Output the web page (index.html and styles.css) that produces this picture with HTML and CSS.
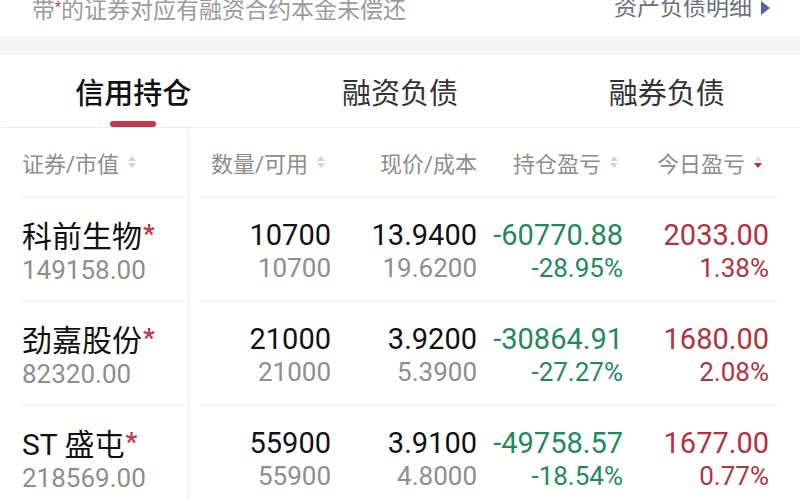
FILE: index.html
```html
<!DOCTYPE html>
<html lang="zh">
<head>
<meta charset="utf-8">
<link rel="stylesheet" href="styles.css">
</head>
<body>
<div class="notice">
  <span class="notice-text">带<span class="star-s">*</span>的证券对应有融资合约本金未偿还</span>
  <span class="notice-link">资产负债明细<span class="tri-right"></span></span>
</div>
<div class="band"></div>
<div class="tabs">
  <div class="tab active">信用持仓<span class="underline"></span></div>
  <div class="tab">融资负债</div>
  <div class="tab">融券负债</div>
</div>
<div class="table">
  <div class="frozen">
    <div class="fcell head"><span>证券/市值</span><span class="sort"><i class="up"></i><i class="down"></i></span></div>
    <div class="fcell"><div class="name">科前生物<span class="star">*</span></div><div class="sub">149158.00</div></div>
    <div class="fcell"><div class="name">劲嘉股份<span class="star">*</span></div><div class="sub">82320.00</div></div>
    <div class="fcell"><div class="name">ST 盛屯<span class="star">*</span></div><div class="sub">218569.00</div></div>
  </div>
  <div class="scroll">
    <div class="srow head">
      <div class="col"><span>数量/可用</span><span class="sort"><i class="up"></i><i class="down"></i></span></div>
      <div class="col">现价/成本</div>
      <div class="col"><span>持仓盈亏</span><span class="sort"><i class="up"></i><i class="down"></i></span></div>
      <div class="col"><span>今日盈亏</span><span class="sort active"><i class="up"></i><i class="down"></i></span></div>
    </div>
    <div class="srow">
      <div class="col"><div class="main">10700</div><div class="sub">10700</div></div>
      <div class="col"><div class="main">13.9400</div><div class="sub">19.6200</div></div>
      <div class="col green"><div class="main">-60770.88</div><div class="sub">-28.95%</div></div>
      <div class="col red"><div class="main">2033.00</div><div class="sub">1.38%</div></div>
    </div>
    <div class="srow">
      <div class="col"><div class="main">21000</div><div class="sub">21000</div></div>
      <div class="col"><div class="main">3.9200</div><div class="sub">5.3900</div></div>
      <div class="col green"><div class="main">-30864.91</div><div class="sub">-27.27%</div></div>
      <div class="col red"><div class="main">1680.00</div><div class="sub">2.08%</div></div>
    </div>
    <div class="srow">
      <div class="col"><div class="main">55900</div><div class="sub">55900</div></div>
      <div class="col"><div class="main">3.9100</div><div class="sub">4.8000</div></div>
      <div class="col green"><div class="main">-49758.57</div><div class="sub">-18.54%</div></div>
      <div class="col red"><div class="main">1677.00</div><div class="sub">0.77%</div></div>
    </div>
  </div>
</div>
</body>
</html>
```

FILE: styles.css
```css
* { box-sizing: border-box; }
html, body { margin: 0; padding: 0; background: #fff; }
body {
  width: 800px;
  height: 500px;
  overflow: hidden;
  font-family: Roboto, "Noto Sans CJK SC", "Noto Sans", sans-serif;
  color: #111;
}
.notice {
  height: 37px;
  display: flex;
  justify-content: space-between;
  align-items: flex-start;
  padding: 0 30px 0 32px;
}
.notice-text {
  font-size: 23px;
  line-height: 23px;
  margin-top: -4px;
  color: #9a9a9a;
}
.star-s { color: #c0394b; font-size: 14px; vertical-align: 6px; }
.notice-link {
  font-size: 23px;
  line-height: 23px;
  margin-top: -4px;
  color: #6b6f7a;
  display: flex;
  align-items: center;
}
.tri-right {
  display: inline-block;
  width: 0; height: 0;
  border-top: 7px solid transparent;
  border-bottom: 7px solid transparent;
  border-left: 9px solid #4d63b0;
  margin-left: 9px;
}
.band { height: 18px; background: #f4f4f5; }
.tabs {
  height: 73px;
  display: grid;
  grid-template-columns: 1fr 1fr 1fr;
  border-bottom: 1px solid #f0f0f0;
}
.tab {
  position: relative;
  display: flex;
  justify-content: center;
  align-items: center;
  font-size: 29px;
  color: #333;
  padding-bottom: 1px;
}
.tab.active { color: #111; font-weight: 500; }
.underline {
  position: absolute;
  bottom: 0;
  left: 50%;
  width: 46px;
  margin-left: -23px;
  height: 6px;
  border-radius: 3px;
  background: #c23a4c;
}
.table { display: flex; }
.frozen {
  width: 187px;
  flex: none;
  position: relative;
  box-shadow: 3px 0 4px -1px rgba(0,0,0,0.07);
  background: #fff;
}
.fcell {
  margin-left: 22px;
  margin-right: 2px;
  height: 104px;
  border-bottom: 1px solid #efefef;
  display: flex;
  flex-direction: column;
  justify-content: center;
  padding-top: 5px;
}
.fcell.head, .srow.head {
  height: 69px;
  flex-direction: row;
  align-items: center;
  justify-content: flex-start;
  font-size: 22px;
  color: #8c8c8c;
  padding-top: 0;
}
.name {
  font-size: 30px;
  line-height: 34px;
  color: #111;
}
.star { color: #c0394b; font-weight: 700; font-size: 26px; vertical-align: 4px; margin-left: 1px; }
.sub {
  font-size: 26px;
  line-height: 32px;
  color: #8e8e8e;
}
.scroll {
  flex: 1;
  margin-left: 13px;
  margin-right: 20px;
}
.srow {
  height: 104px;
  border-bottom: 1px solid #efefef;
  display: flex;
  align-items: center;
  padding-top: 5px;
}
.col {
  width: 146px;
  text-align: right;
}
.col:first-child { width: 131px; }
.srow.head .col {
  display: flex;
  justify-content: flex-end;
  align-items: center;
}
.srow.head .col:first-child { padding-right: 6px; }
.srow.head .col:nth-child(3) { padding-right: 5px; }
.srow.head .col:nth-child(4) { padding-right: 7px; }
.main {
  font-size: 29px;
  line-height: 34px;
  color: #111;
}
.col .sub { font-size: 26px; }
.green .main, .green .sub { color: #1f8a5c; }
.red .main, .red .sub { color: #b3323f; }
.sort {
  display: inline-flex;
  flex-direction: column;
  align-items: center;
  margin-left: 9px;
  gap: 2px;
}
.sort i {
  display: block;
  width: 0; height: 0;
  border-left: 4px solid transparent;
  border-right: 4px solid transparent;
}
.sort .up { border-bottom: 5px solid #d4d4d4; }
.sort .down { border-top: 5px solid #d4d4d4; }
.sort.active .up { border-bottom-color: #e2e2e2; }
.sort.active .down { border-top-color: #b3323f; }
```
